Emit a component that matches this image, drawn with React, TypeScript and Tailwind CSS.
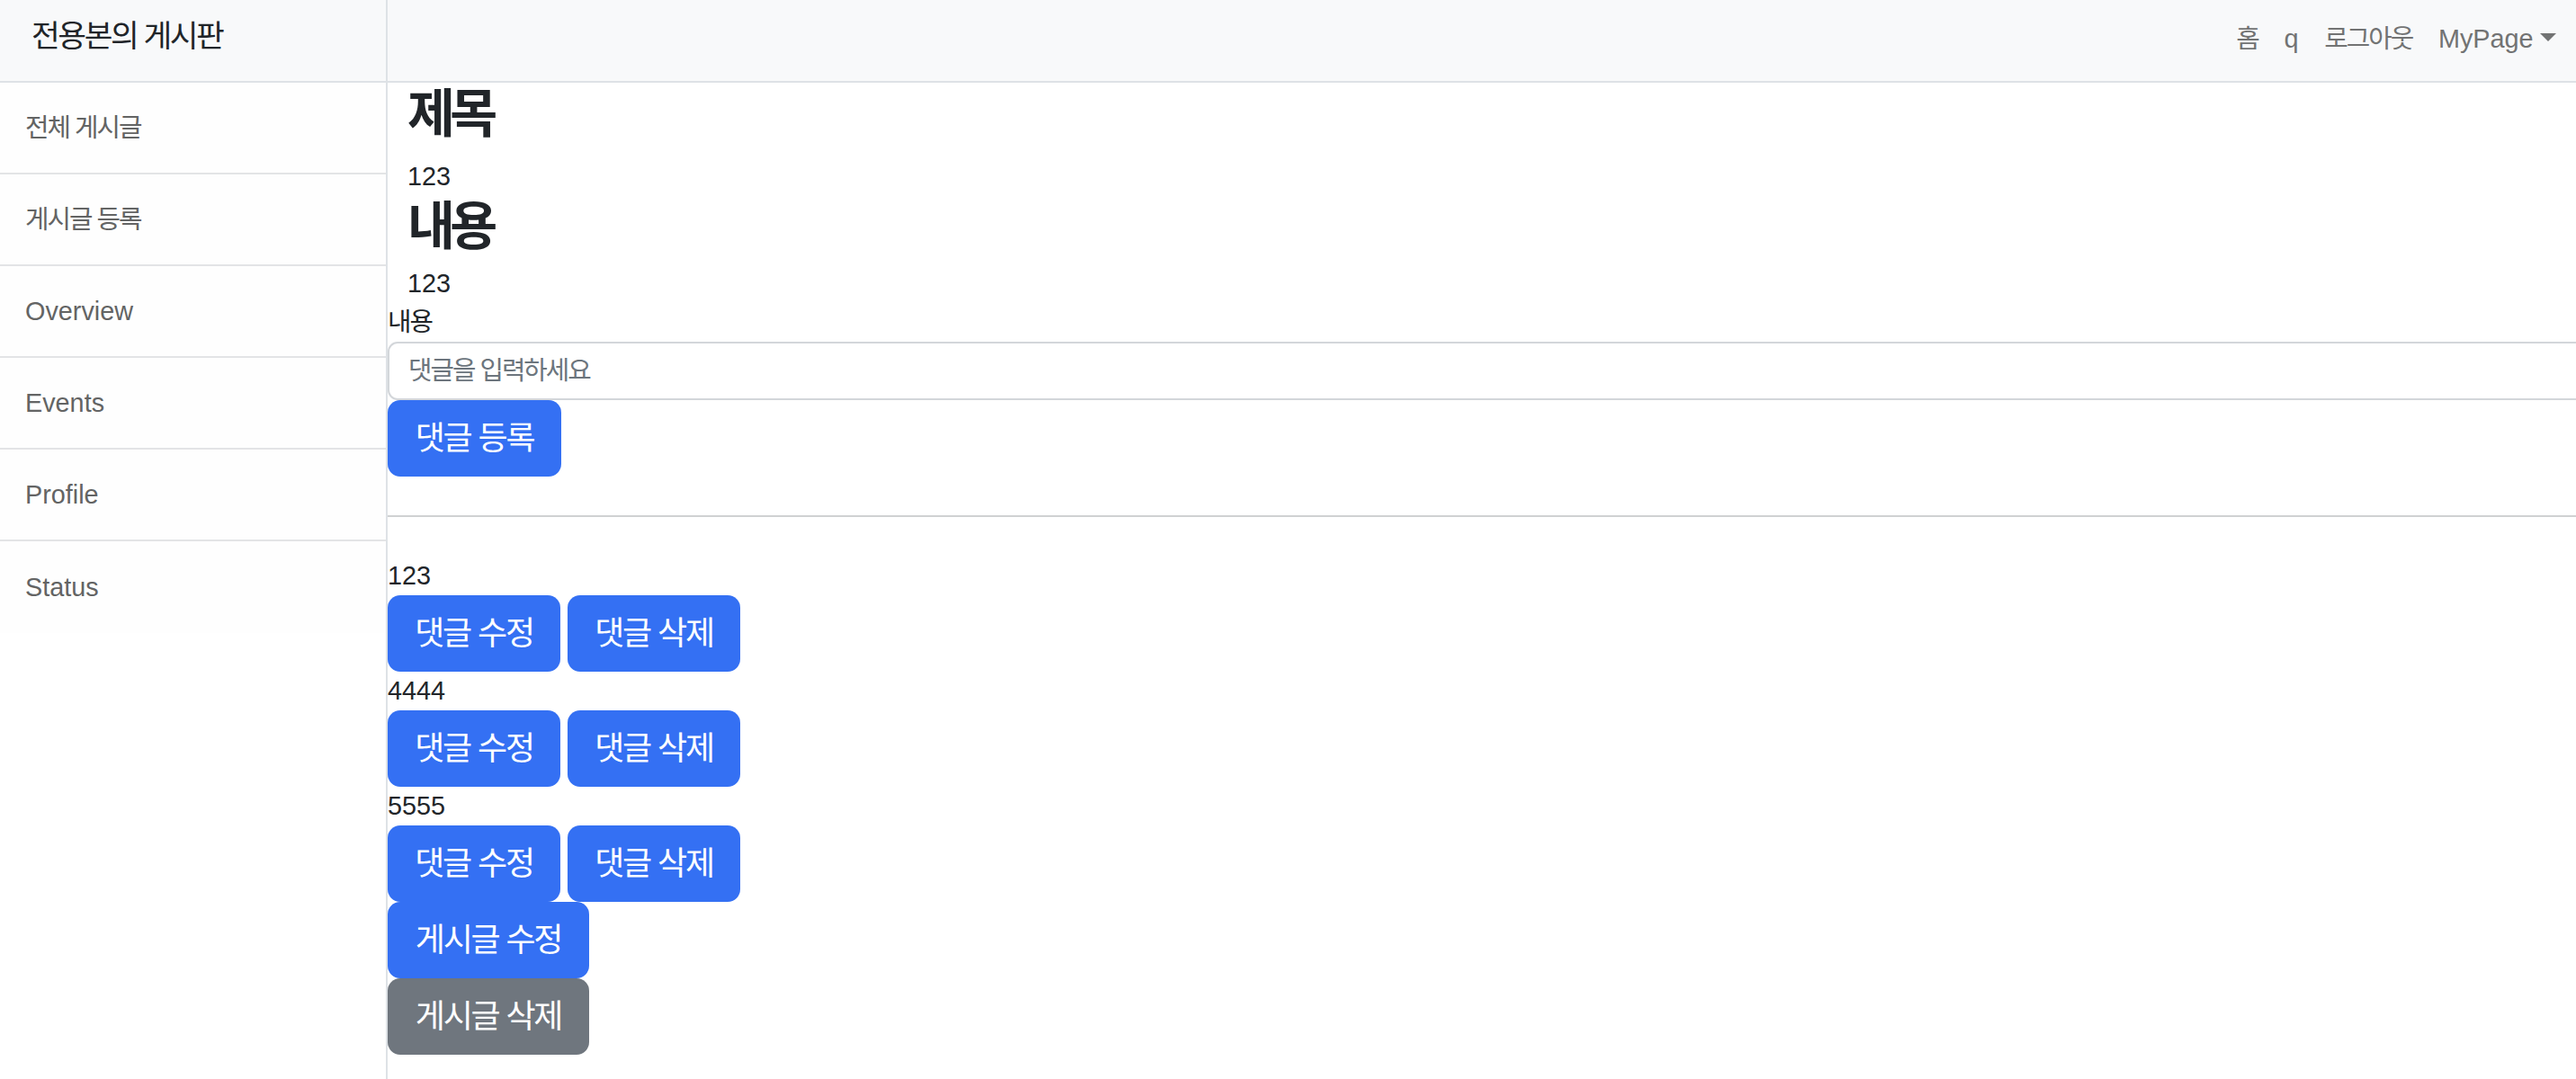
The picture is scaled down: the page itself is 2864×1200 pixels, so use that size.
import React from "react";

const KO = "tracking-[-0.07em]";

function Btn({ children, w, gray }: { children: React.ReactNode; w: string; gray?: boolean }) {
  return (
    <button
      className={
        "h-[85px] rounded-[14px] text-white text-[36px] leading-[54px] flex items-center justify-center tracking-[-0.06em] " +
        w +
        " " +
        (gray ? "bg-[#6f767e]" : "bg-[#3470f3]")
      }
    >
      {children}
    </button>
  );
}

function SideItem({ label, ko, last }: { label: string; ko?: boolean; last?: boolean }) {
  return (
    <div
      className={
        "h-[102px] flex items-center pl-[28px] text-[28.8px] leading-[43px] text-[#636464] bg-[#fefefe] " +
        (last ? "" : "border-b-2 border-[#e3e4e6] ") +
        (ko ? KO : "")
      }
    >
      {label}
    </div>
  );
}

function NavLink({ children, ko }: { children: React.ReactNode; ko?: boolean }) {
  return (
    <span className={"px-[14.4px] text-[28.8px] leading-[43px] text-[#727373] " + (ko ? KO : "")}>
      {children}
    </span>
  );
}

export default function App() {
  const comments = ["123", "4444", "5555"];
  return (
    <div className="flex min-h-screen bg-white font-['Liberation_Sans','Noto_Sans_CJK_KR',sans-serif] text-[#212529]">
      <aside className="w-[431px] shrink-0 border-r-2 border-[#dee2e6] bg-white">
        <div className="h-[92px] bg-[#f8f9fa] border-b-2 border-[#dee2e6] pl-[35px] pt-[20px]">
          <span className={"text-[34.5px] leading-[41px] text-[#212529] " + KO}>전용본의 게시판</span>
        </div>
        <SideItem label="전체 게시글" ko />
        <SideItem label="게시글 등록" ko />
        <SideItem label="Overview" />
        <SideItem label="Events" />
        <SideItem label="Profile" />
        <SideItem label="Status" last />
      </aside>

      <main className="flex-1 min-w-0 overflow-hidden">
        <nav className="h-[92px] bg-[#f8f9fa] border-b-2 border-[#dee2e6] flex items-center justify-end pr-[8px] pb-[4px]">
          <NavLink ko>홈</NavLink>
          <NavLink>q</NavLink>
          <NavLink ko>로그아웃</NavLink>
          <span className="px-[14.4px] text-[28.8px] leading-[43px] text-[#727373] flex items-center">
            MyPage
            <span className="inline-block ml-[7px] mb-[4px] w-0 h-0 border-t-[9px] border-l-[9px] border-r-[9px] border-t-[#727373] border-l-transparent border-r-transparent"></span>
          </span>
        </nav>

        <div className="pl-[22px]">
          <h2 className="text-[57.6px] leading-[69px] font-semibold mt-[1px] mb-[13px] tracking-[-0.1em]">제목</h2>
          <div className="text-[28.8px] leading-[43px]">123</div>
          <h2 className="text-[57.6px] leading-[69px] font-semibold mb-[7px] tracking-[-0.1em]">내용</h2>
          <div className="text-[28.8px] leading-[43px]">123</div>
        </div>

        <label className={"block text-[28.8px] leading-[43px] text-[#212529] " + KO}>내용</label>
        <input
          className={
            "block h-[65px] w-[2480px] border-2 border-[#d3d6da] rounded-[11px] px-[21px] text-[28.8px] bg-white placeholder:text-[#6c757d] outline-none " +
            KO
          }
          placeholder="댓글을 입력하세요"
        />
        <Btn w="w-[193px]">댓글 등록</Btn>

        <div className="mt-[43px] h-[2px] bg-[#d0d1d2]"></div>

        <div className="mt-[44px]">
          {comments.map((c) => (
            <div key={c}>
              <div className="text-[28.8px] leading-[43px] text-[#212529]">{c}</div>
              <div className="flex gap-[8px]">
                <Btn w="w-[192px]">댓글 수정</Btn>
                <Btn w="w-[192px]">댓글 삭제</Btn>
              </div>
            </div>
          ))}
        </div>
        <Btn w="w-[224px]">게시글 수정</Btn>
        <Btn w="w-[224px]" gray>
          게시글 삭제
        </Btn>
      </main>
    </div>
  );
}
